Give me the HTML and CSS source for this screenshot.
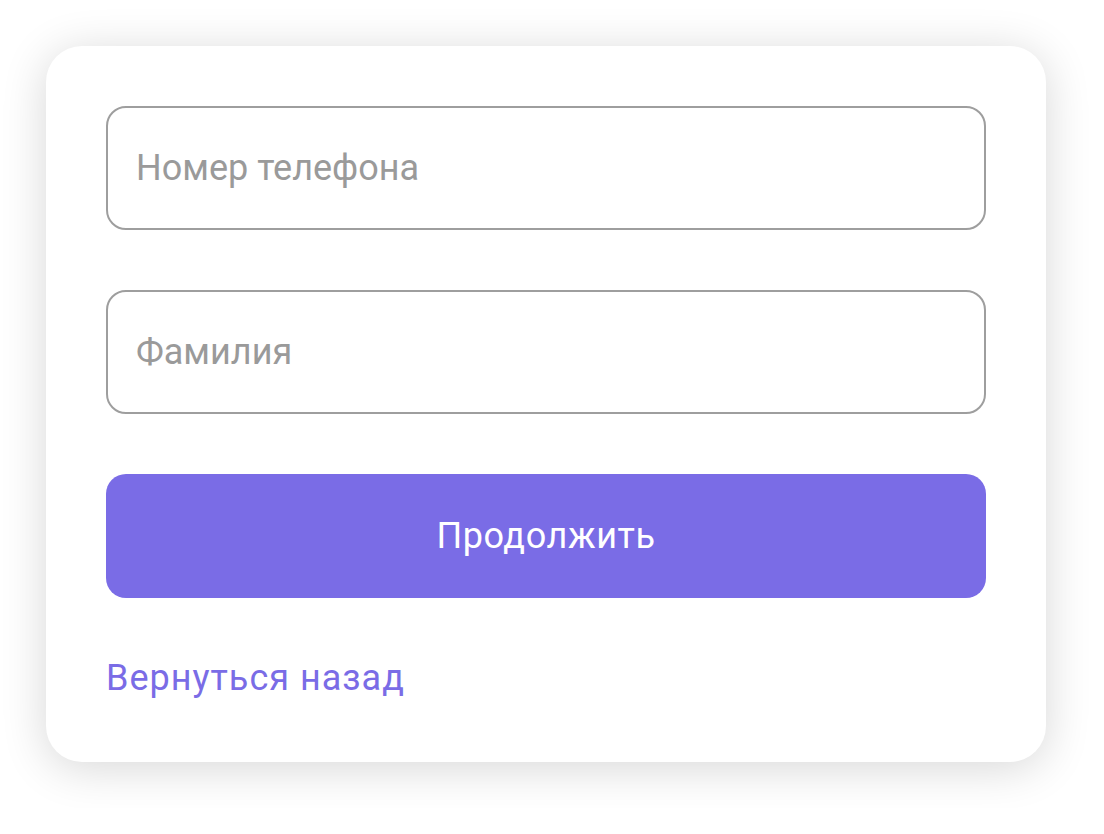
FILE: index.html
```html
<!DOCTYPE html>
<html lang="ru">
<head>
<meta charset="utf-8">
<link rel="stylesheet" href="styles.css">
</head>
<body>
<div class="card">
  <div class="field"><span class="placeholder">Номер телефона</span></div>
  <div class="field"><span class="placeholder">Фамилия</span></div>
  <button class="btn">Продолжить</button>
  <a class="back" href="#">Вернуться назад</a>
</div>
</body>
</html>
```
FILE: styles.css
```css
html, body {
  margin: 0;
  padding: 0;
  background: #ffffff;
}
body {
  padding: 46px;
  font-family: Roboto, "Liberation Sans", sans-serif;
}
.card {
  width: 1000px;
  height: 716px;
  box-sizing: border-box;
  background: #ffffff;
  border-radius: 36px;
  box-shadow: 0 6px 46px rgba(0, 0, 0, 0.16);
  padding: 60px;
  display: flex;
  flex-direction: column;
  gap: 60px;
}
.field {
  height: 124px;
  box-sizing: border-box;
  border: 2px solid #9e9e9e;
  border-radius: 20px;
  padding: 0 28px;
  display: flex;
  align-items: center;
}
.placeholder {
  font-size: 36px;
  color: #9a9a9a;
}
.btn {
  height: 124px;
  border: none;
  border-radius: 20px;
  background: #7a6ce6;
  color: #ffffff;
  font-family: Roboto, "Liberation Sans", sans-serif;
  font-size: 36px;
  letter-spacing: 0.6px;
  padding: 0;
}
.back {
  font-size: 36px;
  line-height: 44px;
  letter-spacing: 1px;
  color: #7a6ce6;
  text-decoration: none;
  margin-top: -2px;
}
```
